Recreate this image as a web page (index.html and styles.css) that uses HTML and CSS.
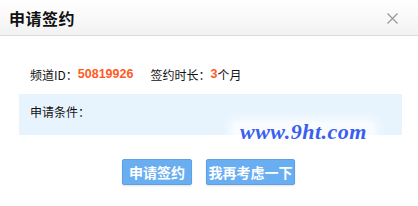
FILE: index.html
```html
<!DOCTYPE html>
<html>
<head>
<meta charset="utf-8">
<link rel="stylesheet" href="styles.css">
</head>
<body>
<div class="dialog">
  <div class="header">
    <span class="title">申请签约</span>
    <span class="close">
      <svg width="11" height="11" viewBox="0 0 11 11"><path d="M0.5 0.5L10.5 10.5M10.5 0.5L0.5 10.5" stroke="#9a9a9a" stroke-width="1.3" fill="none"/></svg>
    </span>
  </div>
  <div class="body">
    <div class="info">
      <span class="label">频道ID：</span><span class="num">50819926</span>
      <span class="label gap">签约时长：</span><span class="num">3</span><span class="label">个月</span>
    </div>
    <div class="cond">
      <span class="label">申请条件：</span>
      <span class="mark">www.9ht.com</span>
    </div>
    <div class="actions">
      <button class="btn btn-ok">申请签约</button>
      <button class="btn btn-cancel">我再考虑一下</button>
    </div>
  </div>
</div>
</body>
</html>
```
FILE: styles.css
```css
* { box-sizing: border-box; }
html, body { margin: 0; padding: 0; background: #fff; }
body { font-family: "Noto Sans CJK SC", "Liberation Sans", sans-serif; width: 418px; height: 206px; overflow: hidden; }
.dialog { width: 418px; }
.header {
  height: 36px;
  border-bottom: 1px solid #dcdcdc;
  background: linear-gradient(#ffffff, #f2f2f2);
  display: flex;
  align-items: center;
  justify-content: space-between;
  padding: 0 20px 0 9px;
}
.title { font-size: 16px; font-weight: bold; color: #111; letter-spacing: 0.5px; }
.close { display: flex; width: 11px; height: 11px; margin-top: 1px; }
.body { padding: 27px 16px 0 19px; }
.info { height: 22px; display: flex; align-items: center; padding-left: 11px; font-size: 12px; color: #111; }
.num { font-family: "Liberation Sans", Arial, sans-serif; font-weight: bold; color: #ff5a1e; font-size: 12.5px; }
.gap { margin-left: 17px; }
.cond {
  position: relative;
  margin-top: 9px;
  height: 41px;
  background: #e8f4fd;
  padding: 9px 11px;
  font-size: 12px;
  color: #111;
}
.mark {
  position: absolute;
  left: 215px;
  top: 29px;
  padding: 0 6px;
  font-family: "Liberation Serif", "Times New Roman", serif;
  font-weight: bold;
  font-style: italic;
  font-size: 22px;
  color: #3a5ff0;
  letter-spacing: 0.5px;
  background: rgba(255,255,255,0.75);
  box-shadow: 0 0 8px 4px rgba(255,255,255,0.75);
  line-height: 18px;
}
.actions { display: flex; justify-content: center; gap: 14px; margin-top: 24px; padding-right: 4px; }
.btn {
  height: 26px;
  padding: 0;
  border: 1px solid #5ea0e8;
  border-radius: 2px;
  background: #6aaef2;
  color: #fff;
  font-family: "Noto Sans CJK SC", sans-serif;
  font-weight: bold;
  font-size: 14px;
  box-shadow: 0 1px 2px rgba(0,0,0,0.12);
}
.btn-ok { width: 70px; }
.btn-cancel { width: 89px; }
```
